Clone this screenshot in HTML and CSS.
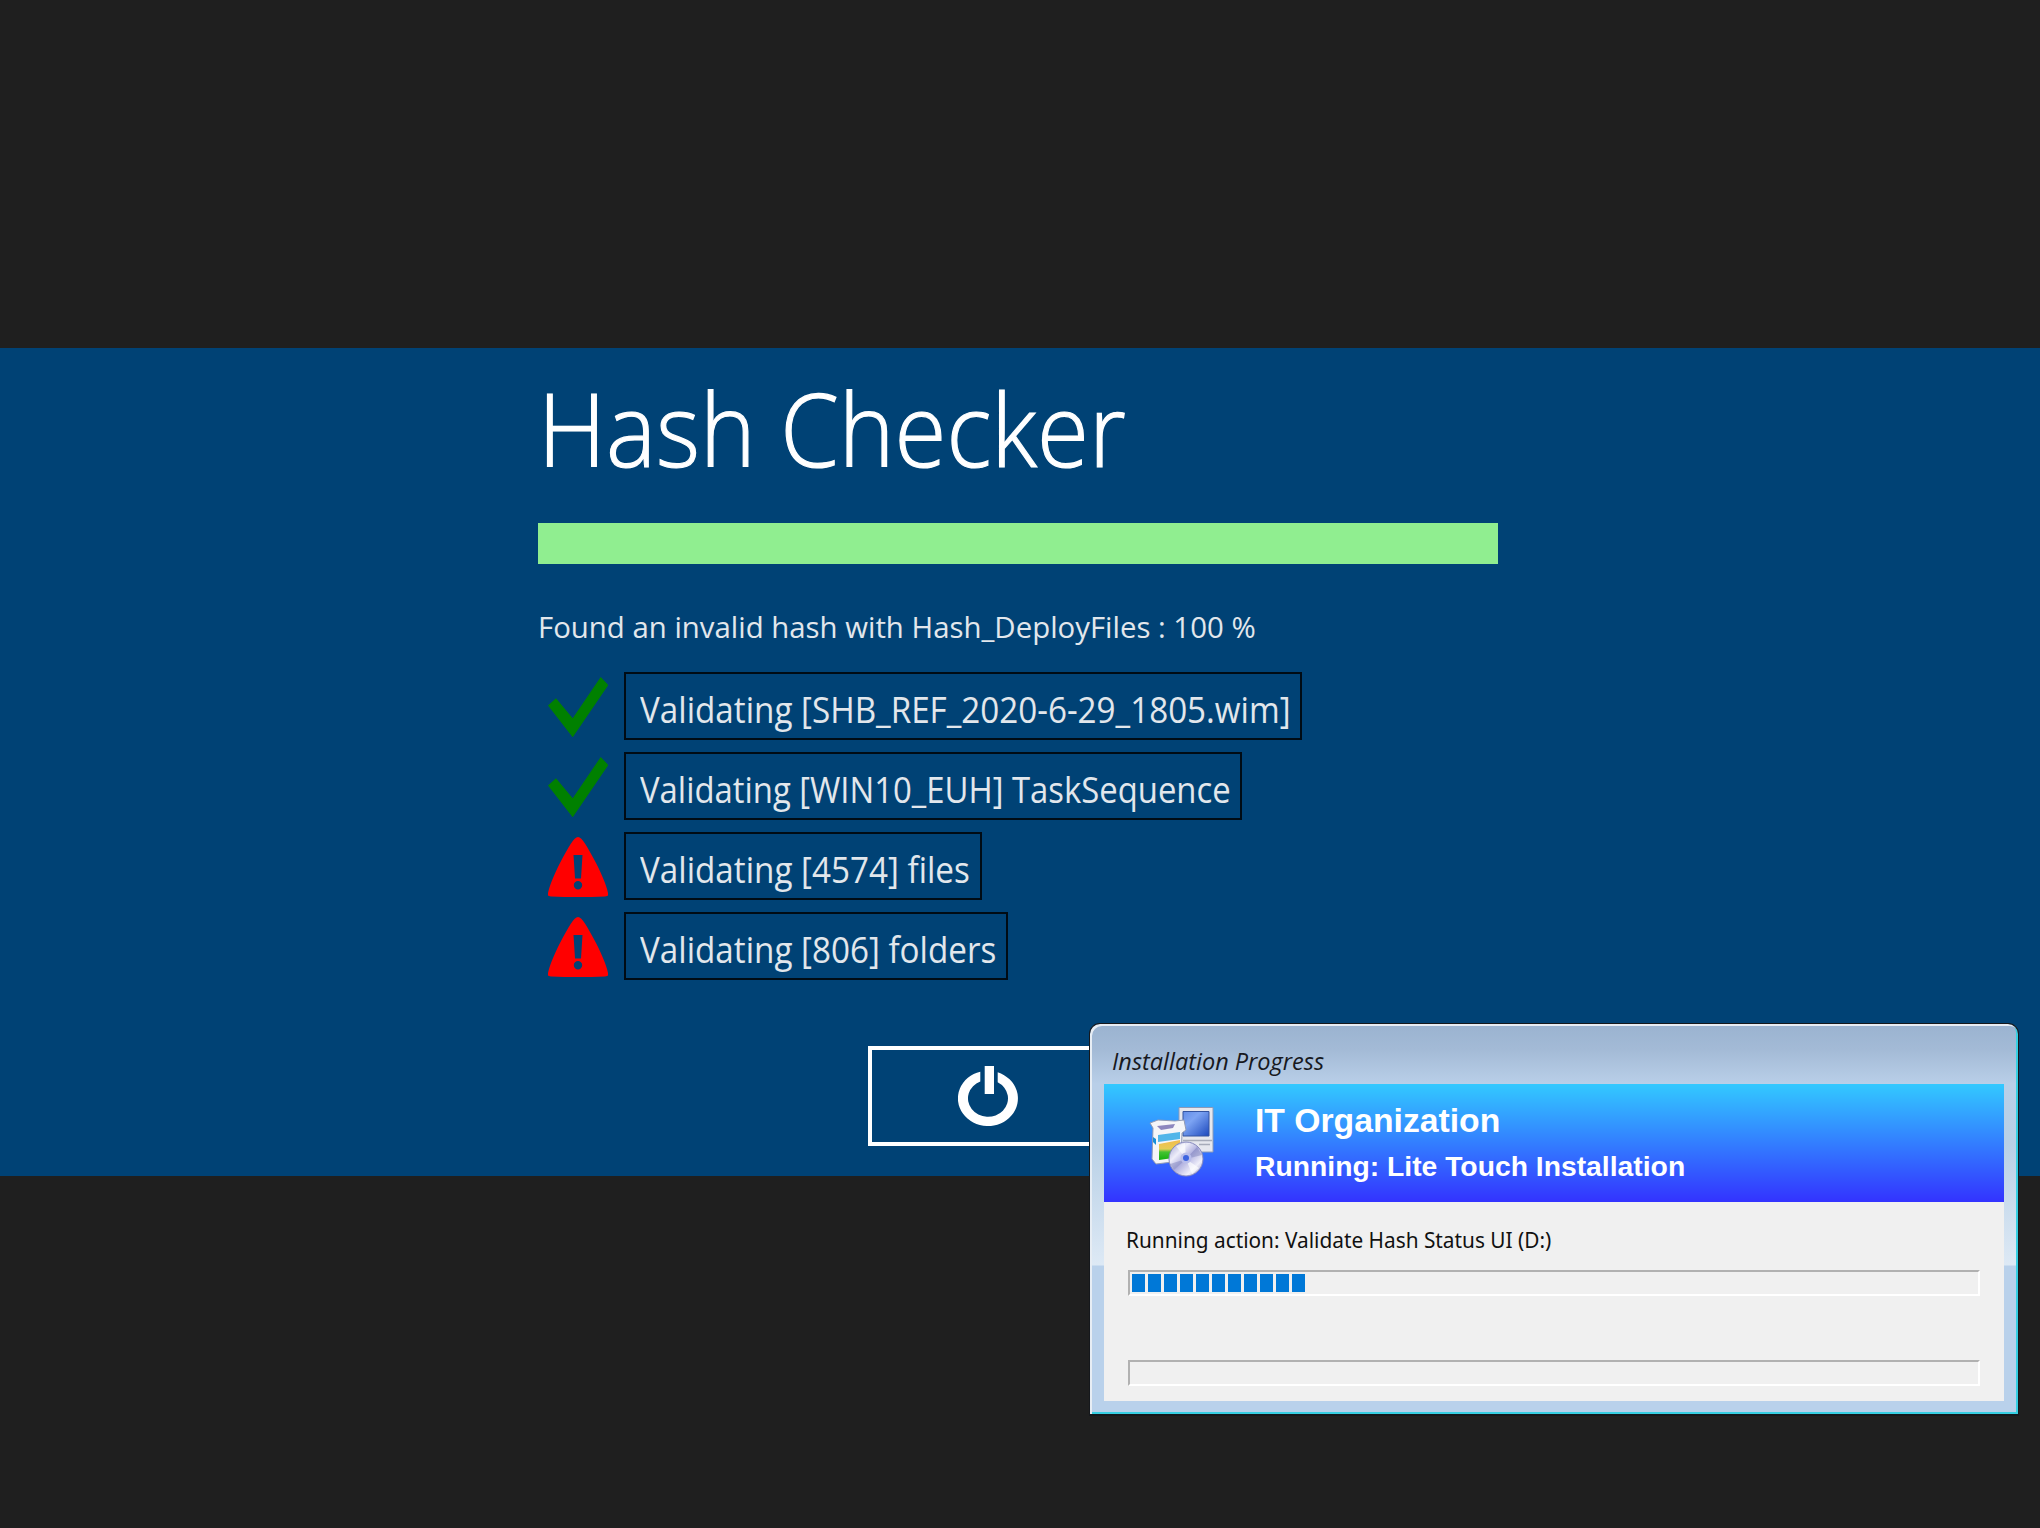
FILE: index.html
```
<!DOCTYPE html>
<html lang="en">
<head>
<meta charset="utf-8">
<title>Hash Checker</title>
<link rel="stylesheet" href="styles.css">
</head>
<body>
<svg class="symbols" aria-hidden="true">
  <symbol id="check" viewBox="0 0 60 60"><path fill="#008000" d="M0 28.500L8 21.300L24.700 41.300L52.700 0L60.300 8L24.700 60.300Z"/></symbol>
  <symbol id="alert" viewBox="0 0 60 60"><path fill="red" fill-rule="evenodd" d="M30 0C34 0 39.500 10 48 26C54 38 58 47 60 56C60.500 58.500 60 59 57 59.400Q30 61 3 59.400C0 59 -.5 58.500 0 56C2 47 6 38 12 26C20.500 10 26 0 30 0ZM25.500 18L27 41.500H33L34.500 18ZM30 44A4.200 4.200 0 1 0 30 52.400A4.200 4.200 0 1 0 30 44Z"/></symbol>
</svg>
<main class="panel">
  <div class="content">
    <h1 class="title"><span class="fit fit-title">Hash Checker</span></h1>
    <div class="bar"></div>
    <p class="status"><span class="fit fit-status">Found an invalid hash with Hash_DeployFiles : 100 %</span></p>
    <ul class="steps">
      <li class="step"><svg class="mark"><use href="#check"/></svg><div class="box image"><span class="fit fit-step">Validating [SHB_REF_2020-6-29_1805.wim]</span></div></li>
      <li class="step"><svg class="mark"><use href="#check"/></svg><div class="box sequence"><span class="fit fit-sequence">Validating [WIN10_EUH] TaskSequence</span></div></li>
      <li class="step"><svg class="mark"><use href="#alert"/></svg><div class="box files"><span class="fit fit-step">Validating [4574] files</span></div></li>
      <li class="step"><svg class="mark"><use href="#alert"/></svg><div class="box folders"><span class="fit fit-step">Validating [806] folders</span></div></li>
    </ul>
    <button class="power" aria-label="Power">
      <svg class="power-icon" viewBox="0 0 60 60"><path fill="#fff" d="M22.300 5.700V15.400A20 18.400 0 1 0 39.700 16.300V6.300A30 27.600 0 1 1 22.300 5.700Z"/><path fill="#fff" d="M26.700 0H36V28H26.700Z"/></svg>
    </button>
  </div>
</main>
<section class="window">
  <header class="caption"><span class="fit fit-caption">Installation Progress</span></header>
  <div class="client">
    <div class="banner">
      <svg class="logo" viewBox="0 0 66 72">
        <defs>
          <linearGradient id="scr" x1="0" y1="0" x2="1" y2="1"><stop offset="0" stop-color="#638de8"/><stop offset=".35" stop-color="#7da4f3"/><stop offset="1" stop-color="#1c48bd"/></linearGradient>
          <linearGradient id="disc" x1="0" y1="0" x2="1" y2="1"><stop offset="0" stop-color="#9a9dd0"/><stop offset=".3" stop-color="#eeeefa"/><stop offset=".5" stop-color="#b0b0df"/><stop offset=".75" stop-color="#f0effa"/><stop offset="1" stop-color="#8b8cc4"/></linearGradient>
          <linearGradient id="pic" x1="0" y1="0" x2="0" y2="1"><stop offset="0" stop-color="#f4bc4e"/><stop offset=".45" stop-color="#e5cc57"/><stop offset=".6" stop-color="#44c332"/><stop offset="1" stop-color="#13b010"/></linearGradient>
        </defs>
        <path fill="#e6e7ee" stroke="#8c9ab8" d="M30 1.500H64V46H36L30 36Z"/>
        <path fill="url(#scr)" stroke="#3454a0" d="M34 5.500H60V30H34Z"/>
        <path stroke="#a7abb9" stroke-width="1.500" d="M34 34.500H63M50 38.500H61"/>
        <path fill="#f5f5f8" stroke="#929bb5" d="M1 17L9 14L26 15L35 14L37 24L33 27L32 55L7 58L3 53L4 22Z"/>
        <path fill="#8d86be" d="M8 20L26 18L24 22L12 24Z"/>
        <path fill="#51b5e9" d="M9 29L31 26V33L9 36Z"/><path fill="#188fd9" d="M4 31L7 33V39L4 36Z"/>
        <path fill="url(#pic)" d="M10 38L31 34V51L10 54Z"/>
        <circle cx="37" cy="53" r="17" fill="url(#disc)" stroke="#8588bd"/>
        <path fill="#fff" opacity=".65" d="M37 53L27 40L36 37ZM37 53L50 62L43 68Z"/>
        <path fill="#7075b5" opacity=".4" d="M37 53L48 41L53 49ZM37 53L21 58L25 64Z"/>
        <circle cx="37" cy="52" r="5.500" fill="#b9bdea"/><circle cx="37" cy="52" r="3" fill="#3d64e0"/>
      </svg>
      <div class="banner-text">
        <div class="org"><span class="fit fit-org">IT Organization</span></div>
        <div class="task"><span class="fit fit-task">Running: Lite Touch Installation</span></div>
      </div>
    </div>
    <div class="action"><span class="fit fit-action">Running action: Validate Hash Status UI (D:)</span></div>
    <div class="track"><i></i><i></i><i></i><i></i><i></i><i></i><i></i><i></i><i></i><i></i><i></i></div>
    <div class="track second"></div>
  </div>
</section>
</body>
</html>
```
FILE: styles.css
```
* { box-sizing: border-box; }
body {
  margin: 0;
  width: 2040px;
  height: 1528px;
  padding-top: 348px;
  overflow: hidden;
  position: relative;
  background: #1f1f1f;
  font-family: "Open Sans", sans-serif;
}
.symbols { position: absolute; width: 0; height: 0; }
.fit { display: inline-block; white-space: pre; transform-origin: 0 50%; }
.fit-title { transform: scaleX(.935); -webkit-text-stroke: 1.200px #fff; }
.fit-status { transform: scaleX(.979); }
.fit-step { transform: scaleX(.91); }
.fit-sequence { transform: scaleX(.9); }
.fit-org { transform: scaleX(1.021); }
.fit-task { transform: scaleX(1.048); }
.fit-action { transform: scaleX(.946); }
.panel { height: 828px; background: #004275; }
.content { width: 960px; margin-left: 538px; }
.title { margin: 0; height: 175px; line-height: 161px; font-size: 101px; font-weight: 300; color: #fff; }
.bar { height: 41px; background: #90ee90; }
.status { margin: 0; height: 108px; padding-top: 42px; line-height: 42px; font-size: 30px; color: #e2e7ec; }
.steps { list-style: none; margin: 0; padding: 0; display: flex; flex-direction: column; gap: 12px; }
.step { display: flex; align-items: center; height: 68px; padding-left: 10px; }
.mark { width: 60px; height: 60px; margin: 1px 16px 0 0; overflow: visible; }
.box { height: 68px; border: 2px solid #000b14; padding-left: 14px; line-height: 70px; font-size: 36.500px; color: #e2e7ec; }
.image { width: 678px; }
.sequence { width: 618px; }
.files { width: 358px; }
.folders { width: 384px; }
.power { display: flex; align-items: center; justify-content: center; width: 240px; height: 100px; margin: 66px 0 0 330px; padding: 0; border: 4px solid #fff; background: none; }
.power-icon { width: 60px; height: 60px; }

.window {
  position: absolute;
  left: 1089px;
  top: 1023px;
  width: 930px;
  height: 393px;
  padding: 1px 14px 13px;
  border: 1px solid #15181c;
  border-bottom-width: 2px;
  border-radius: 11px 11px 0 0;
  background: linear-gradient(#9ab3d0 0, #a3bad6 25px, #b9cfe8 60px, #b9d0e6 120px, #dde9f5 241px, #b9d1eb 242px);
  box-shadow: inset 2px 2px 0 #e7edf4, inset -2px -2px 0 #36cfe2;
}
.caption { height: 59px; padding: 7px 0 0 8px; line-height: 58px; font-size: 23.500px; font-style: italic; color: #17191e; }
.client { height: 317px; background: #f0f0f0; }
.banner { display: flex; height: 118px; background: linear-gradient(#33c9ff, #3333ff); }
.logo { width: 66px; height: 72px; margin: 22px 0 0 45px; }
.banner-text { padding: 16px 0 0 40px; font-family: "Liberation Sans", sans-serif; font-weight: 700; color: #fff; }
.org { height: 42px; line-height: 42px; font-size: 33px; }
.task { height: 50px; line-height: 50px; font-size: 27px; }
.action { height: 68px; padding: 8px 0 0 22px; font: 22px/58px "Noto Sans", sans-serif; color: #111; }
.track { display: flex; gap: 3px; width: 852px; height: 26px; margin-left: 24px; padding: 2px 0 0 2px; border: 2px solid; border-color: #b1b1b1 #fff #fff #b1b1b1; }
.track i { width: 13px; height: 18px; background: #0078d7; }
.second { margin-top: 64px; }
```
